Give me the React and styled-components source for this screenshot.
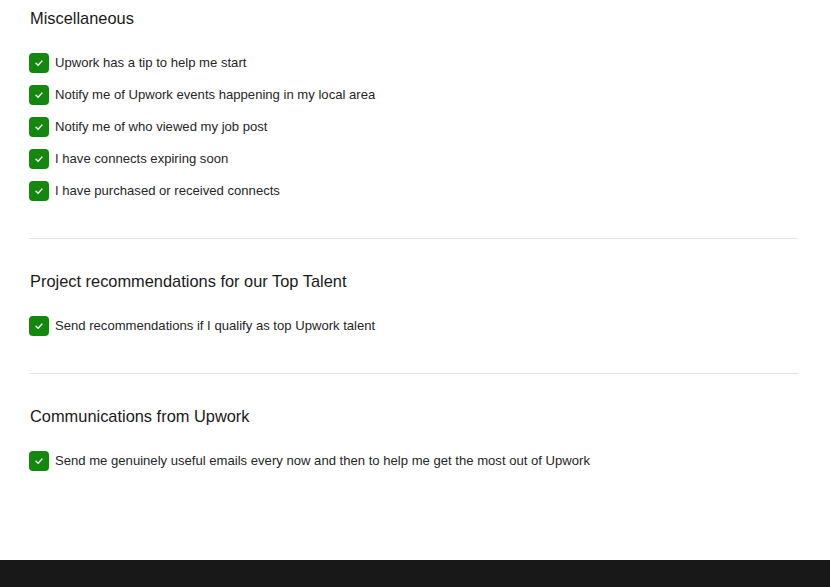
import React from 'react'
import styled, { createGlobalStyle } from 'styled-components'

const GlobalStyle = createGlobalStyle`
  html, body {
    margin: 0;
    padding: 0;
    background: #fff;
  }
  body {
    font-family: "Liberation Sans", Arial, sans-serif;
    color: #222;
  }
`

const Page = styled.div`
  min-height: 587px;
  display: flex;
  flex-direction: column;
`

const Content = styled.main`
  flex: 1;
  padding: 0 32px 0 29px;
  height: 560px;
  box-sizing: border-box;
`

const Section = styled.section`
  padding-top: ${p => p.$first ? '7px' : '31px'};
  padding-bottom: 37px;
  border-bottom: ${p => p.$last ? 'none' : '1px solid #e4e4e4'};
`

const Heading = styled.h2`
  margin: 0 0 24px 1px;
  font-size: 16.4px;
  line-height: 22px;
  font-weight: 400;
  color: #1a1a1a;
`

const List = styled.ul`
  list-style: none;
  margin: 0;
  padding: 0;
  display: flex;
  flex-direction: column;
  gap: 12px;
`

const Item = styled.li`
  display: flex;
  align-items: center;
  gap: 6px;
  font-size: 13.1px;
  line-height: 20px;
  color: #262626;
`

const Box = styled.span`
  width: 20px;
  height: 20px;
  border-radius: 4px;
  background: #14880e;
  display: inline-flex;
  align-items: center;
  justify-content: center;
  flex-shrink: 0;
`

const Footer = styled.footer`
  height: 27px;
  background: #181818;
`

const Check = () => (
  <Box>
    <svg width="10" height="10" viewBox="0 0 10 10" fill="none">
      <path d="M2 5.2 L4.1 7.2 L8 3" stroke="#fff" strokeWidth="1.3" strokeLinecap="round" strokeLinejoin="round" />
    </svg>
  </Box>
)

const sections = [
  {
    title: 'Miscellaneous',
    items: [
      'Upwork has a tip to help me start',
      'Notify me of Upwork events happening in my local area',
      'Notify me of who viewed my job post',
      'I have connects expiring soon',
      'I have purchased or received connects',
    ],
  },
  {
    title: 'Project recommendations for our Top Talent',
    items: ['Send recommendations if I qualify as top Upwork talent'],
  },
  {
    title: 'Communications from Upwork',
    items: ['Send me genuinely useful emails every now and then to help me get the most out of Upwork'],
  },
]

const App = () => {
  return (
    <Page>
      <GlobalStyle />
      <Content>
        {sections.map((s, i) => (
          <Section key={s.title} $first={i === 0} $last={i === sections.length - 1}>
            <Heading>{s.title}</Heading>
            <List>
              {s.items.map(text => (
                <Item key={text}>
                  <Check />
                  {text}
                </Item>
              ))}
            </List>
          </Section>
        ))}
      </Content>
      <Footer />
    </Page>
  )
}

export default App
